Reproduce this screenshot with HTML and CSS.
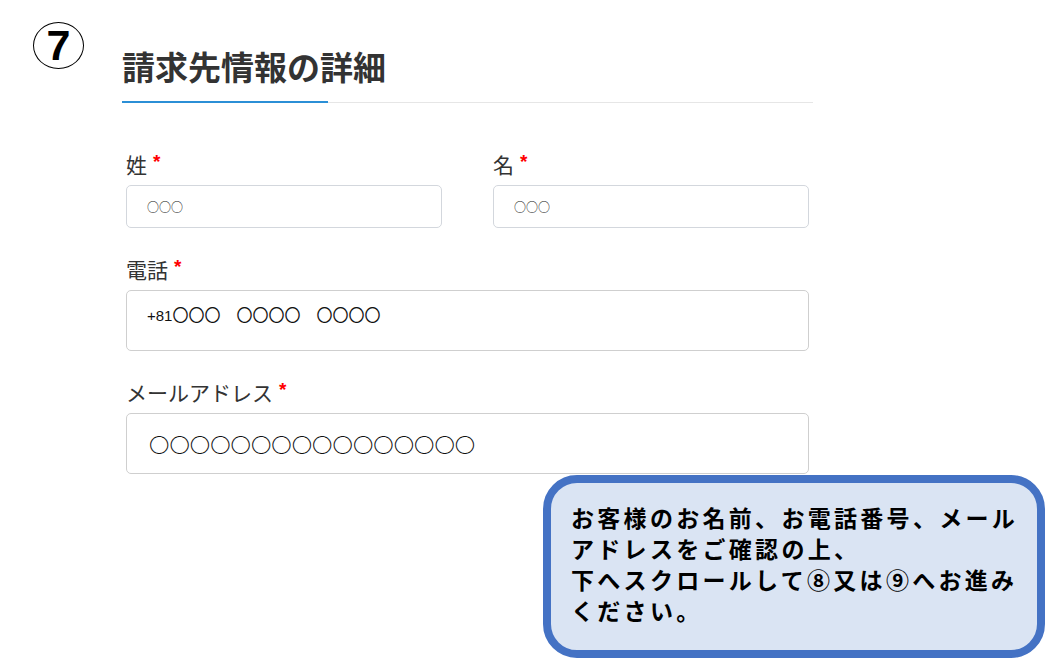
FILE: index.html
```html
<!DOCTYPE html>
<html lang="ja">
<head>
    <meta charset="UTF-8">
    <meta name="viewport" content="width=device-width, initial-scale=1.0">
    <title>請求先情報の詳細</title>
    <link rel="stylesheet" href="styles.css">
</head>
<body>
    <div class="step-mark">7</div>

    <div class="billing">
        <h2 class="billing-title">請求先情報の詳細</h2>
        <div class="title-rule"></div>

        <div class="fields">
            <div class="row two-col">
                <div class="field">
                    <label class="field-label">姓<span class="req">*</span></label>
                    <div class="field-box short">○○○</div>
                </div>
                <div class="field">
                    <label class="field-label">名<span class="req">*</span></label>
                    <div class="field-box short">○○○</div>
                </div>
            </div>

            <div class="field">
                <label class="field-label">電話<span class="req">*</span></label>
                <div class="field-box tall phone"><span class="cc">+81</span>〇〇〇　〇〇〇〇　〇〇〇〇</div>
            </div>

            <div class="field">
                <label class="field-label">メールアドレス<span class="req">*</span></label>
                <div class="field-box tall email">〇〇〇〇〇〇〇〇〇〇〇〇〇〇〇〇</div>
            </div>
        </div>
    </div>

    <div class="callout">
        お客様のお名前、お電話番号、メール<br>
        アドレスをご確認の上、<br>
        下へスクロールして⑧又は⑨へお進み<br>
        ください。
    </div>
</body>
</html>
```

FILE: styles.css
```css
body {
    margin: 0;
    background-color: #fff;
    font-family: "Noto Sans CJK JP", "Noto Sans", sans-serif;
    color: #333;
}
.step-mark {
    position: absolute;
    left: 33px;
    top: 22px;
    width: 49px;
    height: 45px;
    border: 1.5px solid #000;
    border-radius: 50%;
    display: flex;
    align-items: center;
    justify-content: center;
    font-family: "Liberation Sans", Arial, sans-serif;
    font-weight: bold;
    font-size: 43px;
    color: #000;
}
.billing {
    width: 691px;
    margin-left: 122px;
    padding-top: 46px;
}
.billing-title {
    margin: 0;
    font-size: 33px;
    line-height: 40px;
    font-weight: bold;
    color: #333;
}
.title-rule {
    margin-top: 15px;
    height: 2px;
    background:
        linear-gradient(#2b8fd6, #2b8fd6) left top / 206px 2px no-repeat,
        linear-gradient(#e6e6e6, #e6e6e6) left bottom / 100% 1px no-repeat;
}
.fields {
    padding: 47px 4px 0;
    display: flex;
    flex-direction: column;
    gap: 27px;
}
.two-col {
    display: grid;
    grid-template-columns: 1fr 1fr;
    column-gap: 51px;
}
.field {
    display: flex;
    flex-direction: column;
    gap: 7px;
}
.field-label {
    font-size: 21px;
    line-height: 28px;
    color: #333;
}
.req {
    margin-left: 6px;
    font-family: "Liberation Sans", Arial, sans-serif;
    font-weight: bold;
    font-size: 19px;
    line-height: 24px;
    color: #f00;
    vertical-align: top;
}
.field-box {
    box-sizing: border-box;
    border: 1px solid #d3d7dd;
    border-radius: 5px;
    color: #111;
    padding-left: 20px;
}
.field-box.short {
    height: 43px;
    display: flex;
    align-items: center;
    font-size: 12px;
}
.field-box.tall {
    height: 61px;
    border-color: #cfcfcf;
}
.phone {
    padding-top: 12px;
    font-size: 16px;
    line-height: 22px;
}
.phone .cc {
    font-family: "Liberation Sans", Arial, sans-serif;
    font-size: 15px;
}
.email {
    display: flex;
    align-items: center;
    padding-left: 22px;
    font-size: 20.4px;
    font-weight: 300;
}
.callout {
    position: absolute;
    left: 543px;
    top: 475px;
    width: 502px;
    height: 183px;
    box-sizing: border-box;
    padding: 19px 4px 0 20px;
    border: 8px solid #4472c4;
    border-radius: 34px;
    background-color: #dae4f3;
    color: #000;
    font-size: 23px;
    line-height: 31px;
    font-weight: bold;
    letter-spacing: 3.3px;
    white-space: nowrap;
}
```
